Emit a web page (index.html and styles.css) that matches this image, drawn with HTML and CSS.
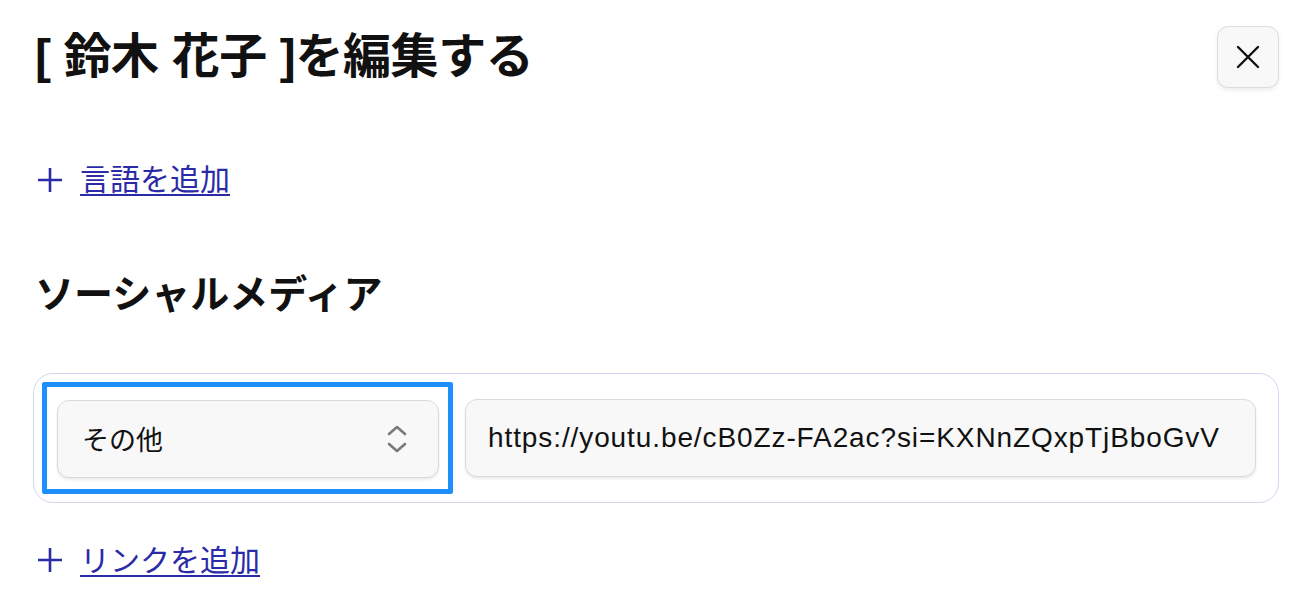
FILE: index.html
```html
<!DOCTYPE html>
<html lang="ja">

<head>
  <meta charset="utf-8">
  <title>[ 鈴木 花子 ]を編集する</title>
  <link rel="stylesheet" href="styles.css">
</head>

<body>
  <div class="dialog">
    <div class="header">
      <h1 class="title">[ 鈴木 花子 ]を編集する</h1>
      <button type="button" class="close" aria-label="閉じる">
        <svg width="26" height="26" viewBox="0 0 26 26">
          <path d="M3 3 L23 23 M23 3 L3 23" stroke="#111" stroke-width="2.4" stroke-linecap="round" fill="none"/>
        </svg>
      </button>
    </div>

    <div class="add">
      <svg class="plus" width="26" height="26" viewBox="0 0 26 26">
        <path d="M13 1 V25 M1 13 H25" stroke="#2b2ba8" stroke-width="2.6" fill="none"/>
      </svg>
      <a href="#" class="link">言語を追加</a>
    </div>

    <h2 class="section">ソーシャルメディア</h2>

    <div class="social">
      <div class="focus">
        <div class="select">
          <span>その他</span>
          <svg width="22" height="30" viewBox="0 0 22 30">
            <path d="M3 10 L11 3 L19 10 M3 20 L11 27 L19 20" stroke="#7a7a7a" stroke-width="2.6" stroke-linecap="round" stroke-linejoin="round" fill="none"/>
          </svg>
        </div>
      </div>
      <input type="text" class="url" value="https://youtu.be/cB0Zz-FA2ac?si=KXNnZQxpTjBboGvV">
    </div>

    <div class="add add-link">
      <svg class="plus" width="26" height="26" viewBox="0 0 26 26">
        <path d="M13 1 V25 M1 13 H25" stroke="#2b2ba8" stroke-width="2.6" fill="none"/>
      </svg>
      <a href="#" class="link">リンクを追加</a>
    </div>
  </div>
</body>

</html>
```

FILE: styles.css
```css
body {
  margin: 0;
  padding: 0;
  background-color: #fff;
  color: #111;
  font-family: "Liberation Sans", "Noto Sans CJK JP", sans-serif;
}

.dialog {
  padding: 26px 35px 0 35px;
}

.header {
  display: flex;
  justify-content: space-between;
  align-items: center;
}

.title {
  margin: 0;
  font-size: 48px;
  line-height: 1.2;
  font-weight: bold;
  letter-spacing: -0.4px;
}

.close {
  width: 62px;
  height: 62px;
  display: flex;
  align-items: center;
  justify-content: center;
  padding: 0;
  background-color: #f8f8f8;
  border: 1.5px solid #dcdcdc;
  border-radius: 11px;
  box-shadow: 0 2px 4px rgba(0, 0, 0, 0.08);
  cursor: pointer;
}

.add {
  display: flex;
  align-items: center;
  gap: 17px;
  margin-top: 69px;
  font-size: 30px;
  line-height: 45px;
}

.plus {
  flex-shrink: 0;
  margin-left: 2px;
}

.link {
  color: #2b2ba8;
  text-decoration: underline;
  text-decoration-thickness: 2px;
  text-underline-offset: 4px;
}

.section {
  margin: 70px 0 0 0;
  font-size: 39px;
  line-height: 1.2;
  font-weight: bold;
}

.social {
  display: flex;
  align-items: center;
  gap: 12px;
  margin: 54px 0 0 -2px;
  padding: 8px 22px 8px 8px;
  border: 1.5px solid #d4d4ee;
  border-radius: 20px;
}

.focus {
  flex: 0 0 382px;
  padding: 13px 9px 11px 10px;
  border: 5px solid #1f8fff;
  border-radius: 2px;
}

.select {
  height: 76px;
  display: flex;
  align-items: center;
  justify-content: space-between;
  padding: 0 30px 0 24px;
  background-color: #f8f8f8;
  border: 1.5px solid #dadada;
  border-radius: 12px;
  box-shadow: 0 2px 3px rgba(0, 0, 0, 0.08);
  font-size: 27px;
}

.url {
  flex: 1;
  min-width: 0;
  height: 78px;
  box-sizing: border-box;
  padding: 0 22px;
  background-color: #f8f8f8;
  border: 1.5px solid #dadada;
  border-radius: 12px;
  box-shadow: 0 2px 3px rgba(0, 0, 0, 0.08);
  font-family: "Liberation Sans", sans-serif;
  font-size: 28px;
  letter-spacing: 0.9px;
  color: #111;
}

.add-link {
  margin-top: 35px;
}
```
